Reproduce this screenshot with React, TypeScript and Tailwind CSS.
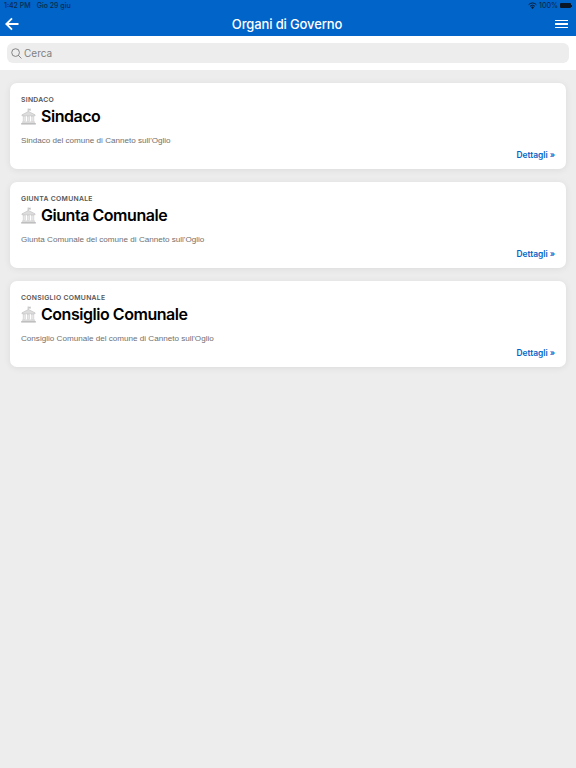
const font = "font-['Inter','Liberation_Sans',sans-serif]";

function Building() {
  return (
    <svg width="15" height="17" viewBox="0 0 16 18" className="shrink-0">
      <path d="M7.6 0.5V4" stroke="#a8a8a8" strokeWidth="0.7" />
      <path d="M7.8 0.7h3l-0.6 0.9 0.6 0.9h-3z" fill="#c4c4c4" />
      <path d="M1 7.2 8 3.6l7 3.6v1H1z" fill="#dcdcdc" stroke="#b4b4b4" strokeWidth="0.5" />
      <rect x="2.2" y="8.6" width="2.4" height="5.6" fill="#e6e6e6" stroke="#bcbcbc" strokeWidth="0.4" />
      <rect x="6.8" y="8.6" width="2.4" height="5.6" fill="#e6e6e6" stroke="#bcbcbc" strokeWidth="0.4" />
      <rect x="11.4" y="8.6" width="2.4" height="5.6" fill="#e6e6e6" stroke="#bcbcbc" strokeWidth="0.4" />
      <rect x="1" y="14.4" width="14" height="1.3" fill="#d0d0d0" />
      <rect x="0.2" y="16" width="15.6" height="1.6" fill="#bcbcbc" />
    </svg>
  );
}

function Card({ label, title, description }: { label: string; title: string; description: string }) {
  return (
    <div className="h-[86px] rounded-[7px] bg-white pl-[11.5px] pr-[11px] pt-[12px] shadow-[0_1px_7px_rgba(0,0,0,0.08)]">
      <div className="text-[6.8px] leading-[9px] font-semibold tracking-[0.3px] text-[#555]">{label}</div>
      <div className="flex h-[24px] items-center gap-[5px]">
        <Building />
        <span className="text-[16px] leading-[24px] font-semibold tracking-[-0.46px] text-black">{title}</span>
      </div>
      <div className="mt-[7px] font-['Liberation_Sans',sans-serif] text-[8.1px] leading-[12px] text-[#6f6f6f]">{description}</div>
      <div className="mt-[2px] text-right text-[8.4px] leading-[12px] font-semibold text-[#0064c8]">Dettagli »</div>
    </div>
  );
}

export default function App() {
  return (
    <div className={`flex min-h-[768px] w-[576px] flex-col bg-[#ededed] ${font}`}>
      <header className="h-[36px] bg-[#0064c8] shadow-[0_1px_0_rgba(0,60,130,0.5)]">
        <div className="flex h-[11px] items-center justify-between pl-[4px] pr-[4px] text-[7px] leading-[11px] font-medium text-[#0b2a4e]">
          <div className="flex gap-[6px]">
            <span>1:42 PM</span>
            <span>Gio 29 giu</span>
          </div>
          <div className="flex items-center gap-[2px]">
            <svg width="9" height="7" viewBox="0 0 18 14">
              <path d="M9 14 6 10.4a4.6 4.6 0 0 1 6 0z" fill="#0b1b30" />
              <path d="M4.2 8.4a7.4 7.4 0 0 1 9.6 0M1.4 5.2a11.6 11.6 0 0 1 15.2 0" stroke="#0b1b30" strokeWidth="2" fill="none" />
            </svg>
            <span>100%</span>
            <div className="h-[5px] w-[11px] rounded-[1px] bg-[#0a1626]" />
            <div className="-ml-[2px] h-[2px] w-[1px] bg-[#0a1626]" />
          </div>
        </div>
        <div className="flex h-[26px] items-center justify-between pl-[5px] pr-[8px]">
          <svg width="14" height="14" viewBox="0 0 14 14" fill="none" stroke="white" strokeWidth="1.8">
            <path d="M13.5 7H1.5M7 1.3 1.3 7 7 12.7" />
          </svg>
          <span className="text-[13px] leading-[20px] font-medium tracking-[-0.13px] text-white">Organi di Governo</span>
          <div className="flex w-[13px] flex-col gap-[2.4px]">
            <div className="h-[1.2px] bg-white" />
            <div className="h-[1.2px] bg-white" />
            <div className="h-[1.2px] bg-white" />
          </div>
        </div>
      </header>
      <div className="h-[34px] bg-white pl-[7px] pr-[7px] pt-[7px]">
        <div className="flex h-[20px] items-center gap-[2px] rounded-[6px] bg-[#ededed] pl-[4px]">
          <svg width="11" height="11" viewBox="0 0 12 12" fill="none" stroke="#6f6f6f" strokeWidth="0.9">
            <circle cx="5" cy="5" r="4.2" />
            <path d="M8 8l3.4 3.4" />
          </svg>
          <span className="text-[10px] text-[#808080]">Cerca</span>
        </div>
      </div>
      <main className="flex flex-col gap-[13px] pl-[9.5px] pr-[10px] pt-[13px]">
        <Card label="SINDACO" title="Sindaco" description="Sindaco del comune di Canneto sull'Oglio" />
        <Card label="GIUNTA COMUNALE" title="Giunta Comunale" description="Giunta Comunale del comune di Canneto sull'Oglio" />
        <Card label="CONSIGLIO COMUNALE" title="Consiglio Comunale" description="Consiglio Comunale del comune di Canneto sull'Oglio" />
      </main>
    </div>
  );
}
